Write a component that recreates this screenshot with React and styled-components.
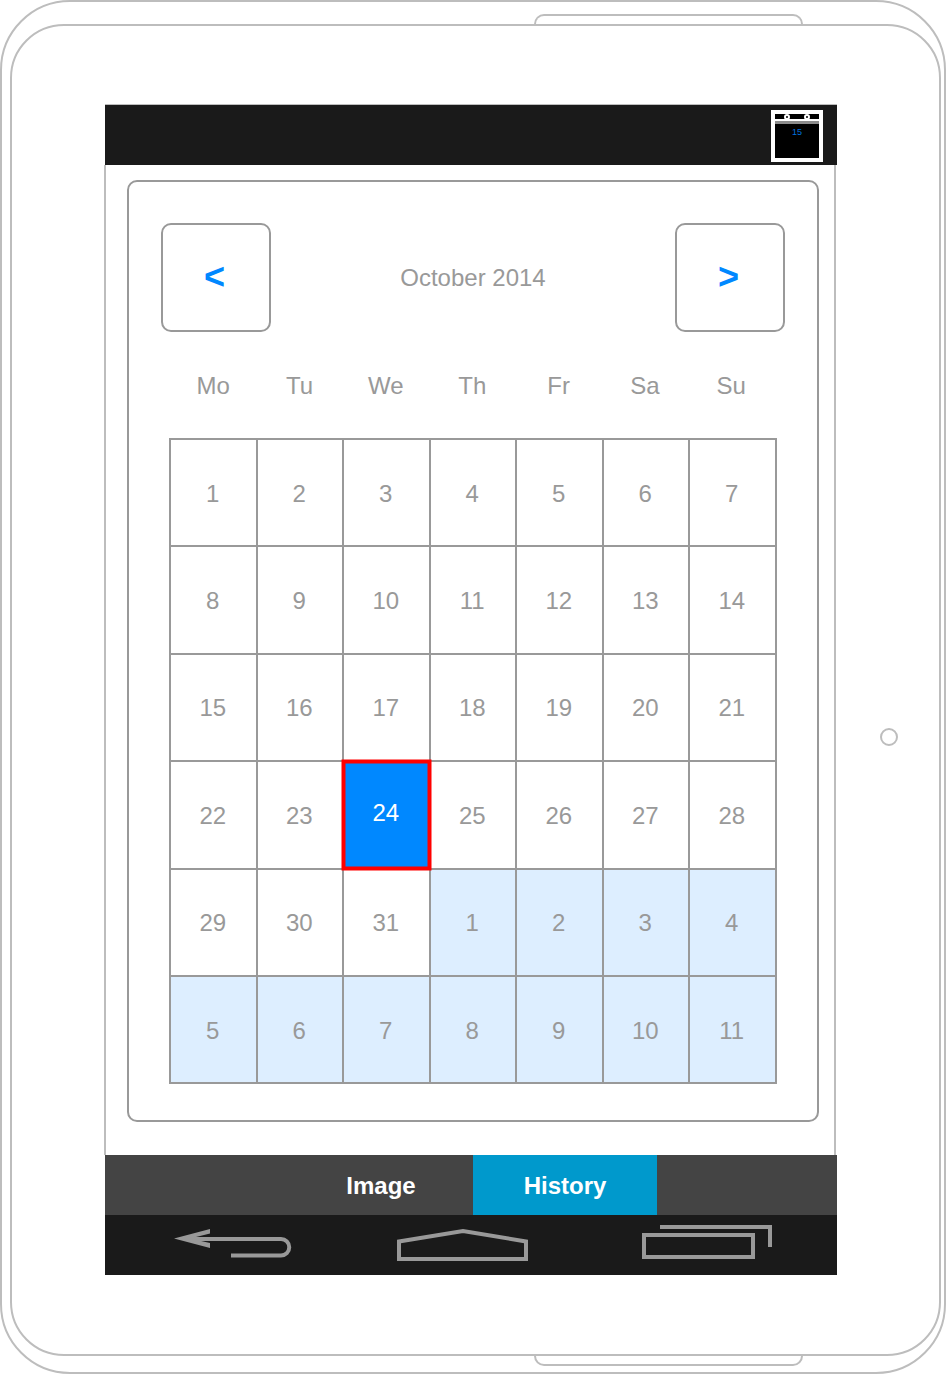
import React from "react";
import styled, { createGlobalStyle } from "styled-components";

const Global = createGlobalStyle`
  html, body { margin: 0; padding: 0; background: #fff; }
  * { box-sizing: border-box; }
  body { font-family: "Liberation Sans", Arial, sans-serif; }
`;

const Outer = styled.div`
  position: relative;
  width: 946px;
  height: 1374px;
  border: 2px solid #bdbdbd;
  border-radius: 70px;
  overflow: hidden;
`;
const Inner = styled.div`
  position: relative;
  width: 931px;
  height: 1332px;
  margin: 22px 0 0 8px;
  border: 2px solid #bdbdbd;
  border-radius: 54px;
`;
const Notch = styled.div`
  position: absolute;
  left: 532px;
  width: 269px;
  height: 12px;
  border: 2px solid #bdbdbd;
  ${(p) =>
    p.$bottom
      ? "top: 1352px; border-top: none; border-radius: 0 0 10px 10px;"
      : "top: 12px; border-bottom: none; border-radius: 10px 10px 0 0;"}
`;
const SideButton = styled.div`
  position: absolute;
  left: 878px;
  top: 726px;
  width: 18px;
  height: 18px;
  border: 2px solid #bdbdbd;
  border-radius: 50%;
`;
const Screen = styled.div`
  display: flex;
  flex-direction: column;
  width: 732px;
  height: 1171px;
  margin: 78px 0 0 93px;
  border-top: 1px solid #bdbdbd;
`;
const TopBar = styled.div`
  display: flex;
  justify-content: flex-end;
  align-items: flex-start;
  height: 60px;
  padding: 5px 14px 0 0;
  background: #1a1a1a;
`;
const CalIcon = styled.div`
  position: relative;
  display: flex;
  flex-direction: column;
  width: 52px;
  height: 52px;
  border: 4px solid #fff;
  background: #000;
`;
const CalIconHead = styled.div`
  height: 5px;
  margin-top: 5px;
  border-top: 2px solid #fff;
  border-bottom: 3px solid #8c8c8c;
`;
const CalRing = styled.span`
  position: absolute;
  top: 0;
  left: ${(p) => p.$x}px;
  width: 6px;
  height: 6px;
  border: 2px solid #fff;
  border-radius: 50%;
  background: #000;
`;
const CalIconNum = styled.div`
  margin-top: 2px;
  font-size: 9px;
  line-height: 12px;
  text-align: center;
  color: #0070dd;
`;
const Body = styled.div`
  width: 732px;
  height: 990px;
  margin-left: -1px;
  padding: 15px 0 0 20.7px;
  border-left: 2px solid #bdbdbd;
  border-right: 2px solid #bdbdbd;
  background: #fff;
`;
const Card = styled.div`
  width: 692.6px;
  height: 942px;
  padding: 41px 32.3px;
  border: 2px solid #999;
  border-radius: 10px;
`;
const Header = styled.div`
  display: flex;
  justify-content: space-between;
  align-items: center;
`;
const NavBtn = styled.div`
  display: flex;
  justify-content: center;
  align-items: center;
  width: 110px;
  height: 109px;
  padding: 0 3px 2px 0;
  border: 2px solid #999;
  border-radius: 10px;
  font-size: 36px;
  font-weight: 700;
  color: #0088ff;
`;
const Title = styled.div`
  font-size: 24px;
  color: #999;
`;
const Calendar = styled.div`
  width: 607.5px;
  margin-left: 8.5px;
`;
const Weekdays = styled.div`
  display: grid;
  grid-template-columns: repeat(7, 1fr);
  height: 40px;
  margin: 34px 0 32px;
  padding: 0 1.5px;
`;
const Weekday = styled.div`
  padding-right: 2px;
  font-size: 24px;
  line-height: 40px;
  text-align: center;
  color: #999;
`;
const Grid = styled.div`
  display: grid;
  grid-template-columns: repeat(7, 1fr);
  grid-auto-rows: 105.4px;
  gap: 2px;
  padding: 2px;
  background: #999;
`;
const Cell = styled.div`
  position: relative;
  display: flex;
  justify-content: center;
  align-items: center;
  padding: ${(p) => (p.$selected ? "0 2px 3px 0" : "2px 2px 0 0")};
  font-size: 24px;
  color: ${(p) => (p.$selected ? "#fff" : "#999")};
  background: ${(p) => (p.$selected ? "#0088ff" : p.$other ? "#ddeeff" : "#fff")};
  ${(p) => p.$selected && "box-shadow: 0 0 0 2.5px #f00, inset 0 0 0 1.5px #f00; z-index: 1;"}
`;
const TabBar = styled.div`
  display: flex;
  height: 60px;
  padding-left: 184px;
  background: #444;
`;
const Tab = styled.div`
  display: flex;
  justify-content: center;
  align-items: center;
  width: 184px;
  padding-top: 2px;
  font-size: 24px;
  font-weight: 700;
  color: #fff;
  background: ${(p) => (p.$active ? "#0099cc" : "transparent")};
`;
const NavBar = styled.div`
  height: 60px;
  background: #1a1a1a;
`;
const NavSvg = styled.svg`
  display: block;
`;

const dates = [
  ...Array.from({ length: 31 }, (_, i) => ({ n: i + 1 })),
  ...Array.from({ length: 11 }, (_, i) => ({ n: i + 1, other: true })),
];

export default function App() {
  return (
    <>
      <Global />
      <Outer>
        <Notch />
        <Notch $bottom />
        <SideButton />
        <Inner>
          <Screen>
            <TopBar>
              <CalIcon>
                <CalRing $x={9} />
                <CalRing $x={29} />
                <CalIconHead />
                <CalIconNum>15</CalIconNum>
              </CalIcon>
            </TopBar>
            <Body>
              <Card>
                <Header>
                  <NavBtn>&lt;</NavBtn>
                  <Title>October 2014</Title>
                  <NavBtn>&gt;</NavBtn>
                </Header>
                <Calendar>
                  <Weekdays>
                    {["Mo", "Tu", "We", "Th", "Fr", "Sa", "Su"].map((d) => (
                      <Weekday key={d}>{d}</Weekday>
                    ))}
                  </Weekdays>
                  <Grid>
                    {dates.map((d, i) => (
                      <Cell key={i} $other={d.other} $selected={!d.other && d.n === 24}>
                        {d.n}
                      </Cell>
                    ))}
                  </Grid>
                </Calendar>
              </Card>
            </Body>
            <TabBar>
              <Tab>Image</Tab>
              <Tab $active>History</Tab>
            </TabBar>
            <NavBar>
              <NavSvg width="732" height="60" viewBox="105 1215 732 60">
                <g fill="none" stroke="#999" strokeWidth="4">
                  <path d="M231 1255.500 H281 A8.250 8.250 0 0 0 281 1239 H185" />
                  <path d="M399 1259 V1241.500 L463 1231 L526 1241.500 V1259 Z" />
                  <path d="M644 1235 H753 V1257 H644 Z" />
                  <path d="M660 1227 H770 V1247" />
                </g>
                <path d="M174 1238.500 L210 1229 V1233.500 L190 1238.500 L210 1243 V1248 Z" fill="#999" />
              </NavSvg>
            </NavBar>
          </Screen>
        </Inner>
      </Outer>
    </>
  );
}
